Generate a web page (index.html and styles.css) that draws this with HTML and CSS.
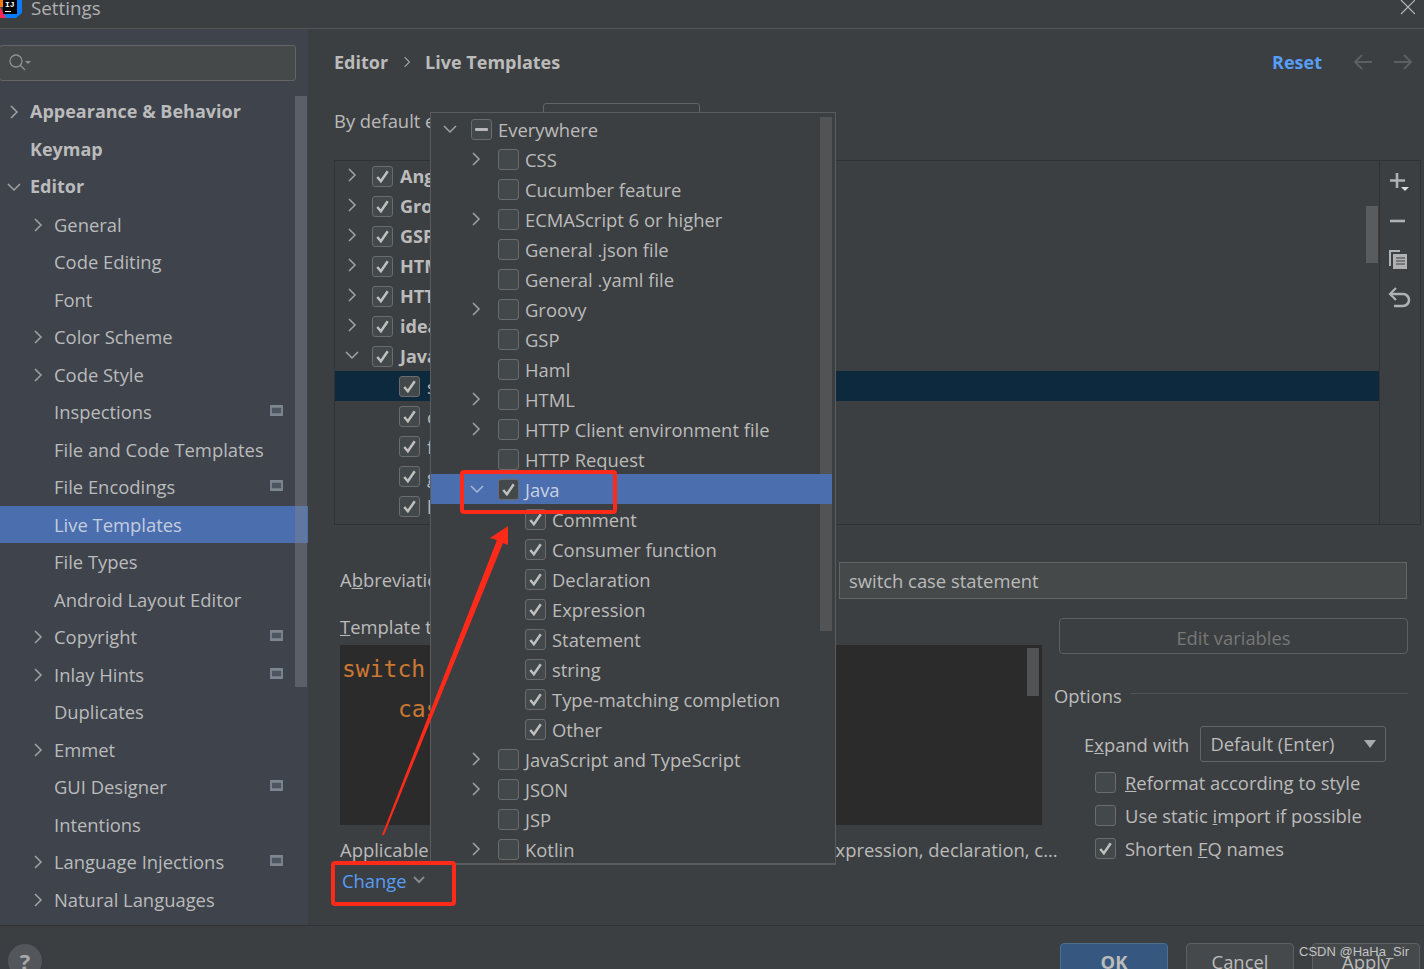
FILE: index.html
```html
<!DOCTYPE html>
<html>
<head>
<title>Settings</title>
<link rel="stylesheet" href="styles.css">
</head>
<body>
<svg class="defs" width="0" height="0">
	<symbol id="arr-r" viewBox="0 0 12 16"><path d="M3 2l6 6-6 6" fill="none" stroke="currentColor" stroke-width="1.5"/></symbol>
	<symbol id="arr-d" viewBox="0 0 16 12"><path d="M2 3l6 6 6-6" fill="none" stroke="currentColor" stroke-width="1.5"/></symbol>
	<symbol id="tick" viewBox="0 0 20 20"><path d="M4.500 10.500l3.800 4.500L15.500 4.500" fill="none" stroke="currentColor" stroke-width="2.600"/></symbol>
	<symbol id="proj" viewBox="0 0 14 12"><path d="M0 0h14v12H0z" fill="#7c8791"/><path d="M2 3h10v6H2z" fill="#4e5560"/></symbol>
</svg>

<div class="window">
	<div class="titlebar">
		<svg class="logo" width="22" height="20" viewBox="0 0 22 20">
			<path d="M4 0h18v14l-6 5H4z" fill="#087cfa"/>
			<path d="M0 0h8v8H0z" fill="#f97a12"/>
			<path d="M0 8l6 11H0z" fill="#fe2857"/>
			<path d="M3 0h14v15H3z" fill="#000"/>
			<path d="M5 12h6v1H5z" fill="#fff"/>
		</svg>
		<span class="logo-text">IJ</span>
		<span class="win-title">Settings</span>
		<svg class="win-close" width="15" height="15" viewBox="0 0 15 15"><path d="M1 0l14 14M15 0L1 14" stroke="#bbb" stroke-width="1.100"/></svg>
	</div>

	<div class="content">
		<div class="sidebar">
			<div class="search">
				<svg width="26" height="20" viewBox="0 0 26 20"><circle cx="9" cy="8" r="6" fill="none" stroke="#8f9294" stroke-width="1.300"/><path d="M13 12l5 5" stroke="#8f9294" stroke-width="1.300"/><path d="M18 8h6l-3 3z" fill="#8f9294"/></svg>
			</div>
			<div class="nav-wrap">
				<ul class="nav">
					<li class="bold"><svg class="a"><use href="#arr-r"/></svg>Appearance &amp; Behavior</li>
					<li class="bold">Keymap</li>
					<li class="bold"><svg class="d"><use href="#arr-d"/></svg>Editor</li>
					<li class="sub"><svg class="a"><use href="#arr-r"/></svg>General</li>
					<li class="sub">Code Editing</li>
					<li class="sub">Font</li>
					<li class="sub"><svg class="a"><use href="#arr-r"/></svg>Color Scheme</li>
					<li class="sub"><svg class="a"><use href="#arr-r"/></svg>Code Style</li>
					<li class="sub">Inspections<svg class="p"><use href="#proj"/></svg></li>
					<li class="sub">File and Code Templates</li>
					<li class="sub">File Encodings<svg class="p"><use href="#proj"/></svg></li>
					<li class="sub on">Live Templates</li>
					<li class="sub">File Types</li>
					<li class="sub">Android Layout Editor</li>
					<li class="sub"><svg class="a"><use href="#arr-r"/></svg>Copyright<svg class="p"><use href="#proj"/></svg></li>
					<li class="sub"><svg class="a"><use href="#arr-r"/></svg>Inlay Hints<svg class="p"><use href="#proj"/></svg></li>
					<li class="sub">Duplicates</li>
					<li class="sub"><svg class="a"><use href="#arr-r"/></svg>Emmet</li>
					<li class="sub">GUI Designer<svg class="p"><use href="#proj"/></svg></li>
					<li class="sub">Intentions</li>
					<li class="sub"><svg class="a"><use href="#arr-r"/></svg>Language Injections<svg class="p"><use href="#proj"/></svg></li>
					<li class="sub"><svg class="a"><use href="#arr-r"/></svg>Natural Languages</li>
				</ul>
				<div class="nav-scroll"></div>
			</div>
		</div>

		<div class="main">
			<div class="crumbs">
				<b>Editor</b>
				<svg class="crumb-sep"><use href="#arr-r"/></svg>
				<b>Live Templates</b>
				<a class="reset">Reset</a>
				<svg class="nav-arrow" width="20" height="16" viewBox="0 0 20 16"><path d="M19 8H2M9 1L2 8l7 7" fill="none" stroke="#5c5f61" stroke-width="2"/></svg>
				<svg class="nav-arrow" width="20" height="16" viewBox="0 0 20 16"><path d="M1 8h17M11 1l7 7-7 7" fill="none" stroke="#5c5f61" stroke-width="2"/></svg>
			</div>
			<div class="default-row">
				<span>By default expand with</span>
				<div class="default-combo"></div>
			</div>

			<div class="templates">
				<div class="tpl-list">
					<div class="tpl-row"><svg class="a"><use href="#arr-r"/></svg><i class="cb on"><svg><use href="#tick"/></svg></i><b>Angular</b></div>
					<div class="tpl-row"><svg class="a"><use href="#arr-r"/></svg><i class="cb on"><svg><use href="#tick"/></svg></i><b>Groovy</b></div>
					<div class="tpl-row"><svg class="a"><use href="#arr-r"/></svg><i class="cb on"><svg><use href="#tick"/></svg></i><b>GSP</b></div>
					<div class="tpl-row"><svg class="a"><use href="#arr-r"/></svg><i class="cb on"><svg><use href="#tick"/></svg></i><b>HTML</b></div>
					<div class="tpl-row"><svg class="a"><use href="#arr-r"/></svg><i class="cb on"><svg><use href="#tick"/></svg></i><b>HTTP</b></div>
					<div class="tpl-row"><svg class="a"><use href="#arr-r"/></svg><i class="cb on"><svg><use href="#tick"/></svg></i><b>idea</b></div>
					<div class="tpl-row"><svg class="d"><use href="#arr-d"/></svg><i class="cb on"><svg><use href="#tick"/></svg></i><b>Java</b></div>
					<div class="tpl-row child sel"><i class="cb on"><svg><use href="#tick"/></svg></i><span>sw</span></div>
					<div class="tpl-row child"><i class="cb on"><svg><use href="#tick"/></svg></i><span>c</span></div>
					<div class="tpl-row child"><i class="cb on"><svg><use href="#tick"/></svg></i><span>f</span></div>
					<div class="tpl-row child"><i class="cb on"><svg><use href="#tick"/></svg></i><span>g</span></div>
					<div class="tpl-row child"><i class="cb on"><svg><use href="#tick"/></svg></i><span>l</span></div>
					<div class="tpl-scroll"></div>
				</div>
				<div class="tpl-tools">
					<svg width="24" height="26" viewBox="0 0 24 26"><path d="M9 4v15M2 11.500h15" stroke="#afb1b3" stroke-width="2.600"/><path d="M13 18h8l-4 4z" fill="#ddd"/></svg>
					<svg width="24" height="26" viewBox="0 0 24 26"><path d="M2 13h15" stroke="#afb1b3" stroke-width="2.600"/></svg>
					<svg width="24" height="26" viewBox="0 0 24 26"><path d="M1 4h11v2H3v14H1z" fill="#afb1b3"/><path d="M5 8h14v15H5z" fill="#afb1b3"/><path d="M8 12h9M8 15h9M8 18h9" stroke="#3c3f41" stroke-width="1.200"/></svg>
					<svg width="24" height="26" viewBox="0 0 24 26"><path d="M3 9h12a5.500 5.500 0 0 1 0 12H6" fill="none" stroke="#afb1b3" stroke-width="2.600"/><path d="M8 3L2 9l6 6" fill="none" stroke="#afb1b3" stroke-width="2.200"/></svg>
				</div>
			</div>

			<div class="abbr-row">
				<span class="abbr-label">A<u>b</u>breviation:</span>
				<div class="desc-input">switch case statement</div>
			</div>

			<div class="detail">
				<div class="detail-left">
					<div class="tt-label"><u>T</u>emplate text:</div>
					<div class="code">
						<div class="code-line">switch</div>
						<div class="code-line indent">case</div>
						<div class="code-scroll"></div>
					</div>
					<div class="applicable"><span>Applicable in Java: string, consumer function, statement, expression, declaration, c...</span></div>
					<div class="change">Change<svg width="12" height="8" viewBox="0 0 12 8"><path d="M1 1l5 5 5-5" fill="none" stroke="#85888b" stroke-width="2"/></svg></div>
				</div>
				<div class="detail-right">
					<div class="edit-btn">Edit variables</div>
					<div class="options-head"><span>Options</span><hr></div>
					<div class="expand-row">
						<span>E<u>x</u>pand with</span>
						<div class="combo">Default (Enter)<em></em></div>
					</div>
					<div class="opt"><i class="cb"></i><span><u>R</u>eformat according to style</span></div>
					<div class="opt"><i class="cb"></i><span>Use static <u>i</u>mport if possible</span></div>
					<div class="opt"><i class="cb on"><svg><use href="#tick"/></svg></i><span>Shorten <u>F</u>Q names</span></div>
				</div>
			</div>
		</div>
	</div>

	<div class="footer">
		<div class="help">?</div>
		<div class="btn primary">OK</div>
		<div class="btn">Cancel</div>
		<div class="btn">Apply</div>
	</div>

	<div class="popup">
		<div class="popup-scroll"></div>
		<ul class="ctx">
			<li class="l0"><svg class="d"><use href="#arr-d"/></svg><i class="cb mixed"><s></s></i>Everywhere</li>
			<li class="l1"><svg class="a"><use href="#arr-r"/></svg><i class="cb"></i>CSS</li>
			<li class="l1"><i class="cb"></i>Cucumber feature</li>
			<li class="l1"><svg class="a"><use href="#arr-r"/></svg><i class="cb"></i>ECMAScript 6 or higher</li>
			<li class="l1"><i class="cb"></i>General .json file</li>
			<li class="l1"><i class="cb"></i>General .yaml file</li>
			<li class="l1"><svg class="a"><use href="#arr-r"/></svg><i class="cb"></i>Groovy</li>
			<li class="l1"><i class="cb"></i>GSP</li>
			<li class="l1"><i class="cb"></i>Haml</li>
			<li class="l1"><svg class="a"><use href="#arr-r"/></svg><i class="cb"></i>HTML</li>
			<li class="l1"><svg class="a"><use href="#arr-r"/></svg><i class="cb"></i>HTTP Client environment file</li>
			<li class="l1"><i class="cb"></i>HTTP Request</li>
			<li class="l1 sel"><svg class="d"><use href="#arr-d"/></svg><i class="cb on"><svg><use href="#tick"/></svg></i>Java</li>
			<li class="l2"><i class="cb on"><svg><use href="#tick"/></svg></i>Comment</li>
			<li class="l2"><i class="cb on"><svg><use href="#tick"/></svg></i>Consumer function</li>
			<li class="l2"><i class="cb on"><svg><use href="#tick"/></svg></i>Declaration</li>
			<li class="l2"><i class="cb on"><svg><use href="#tick"/></svg></i>Expression</li>
			<li class="l2"><i class="cb on"><svg><use href="#tick"/></svg></i>Statement</li>
			<li class="l2"><i class="cb on"><svg><use href="#tick"/></svg></i>string</li>
			<li class="l2"><i class="cb on"><svg><use href="#tick"/></svg></i>Type-matching completion</li>
			<li class="l2"><i class="cb on"><svg><use href="#tick"/></svg></i>Other</li>
			<li class="l1"><svg class="a"><use href="#arr-r"/></svg><i class="cb"></i>JavaScript and TypeScript</li>
			<li class="l1"><svg class="a"><use href="#arr-r"/></svg><i class="cb"></i>JSON</li>
			<li class="l1"><i class="cb"></i>JSP</li>
			<li class="l1"><svg class="a"><use href="#arr-r"/></svg><i class="cb"></i>Kotlin</li>
		</ul>
	</div>

	<!-- red marks drawn over the shot -->
	<div class="mark mark-java"></div>
	<div class="mark mark-change"></div>
	<svg class="mark-arrow" width="140" height="320" viewBox="0 0 140 320"><path d="M1 314L116 19L109 17L127 5L127 24L122 22L3 314z" fill="#ff2a1a"/></svg>
	<div class="watermark">CSDN @HaHa_Sir</div>
</div>
</body>
</html>
```

FILE: styles.css
```css
*{
	box-sizing:border-box;
}
html,body{
	margin:0;
	height:100%;
	overflow:hidden;
	background:#3c3f41;
}
ul{
	list-style:none;
	margin:0;
	padding:0;
}
i,em{
	font-style:normal;
}
.defs{
	position:absolute;
}
.window{
	position:relative;
	width:1424px;
	height:969px;
	overflow:hidden;
	display:flex;
	flex-direction:column;
	background:#3c3f41;
	color:#bbbbbb;
	font-family:"Open Sans","Noto Sans",sans-serif;
	font-size:18.400px;
}

/* title */
.titlebar{
	flex:none;
	height:29px;
	display:flex;
	align-items:flex-end;
	position:relative;
	border-bottom:1px solid #555555;
	padding-bottom:10px;
}
.logo{
	position:absolute;
	left:0;
	top:-1px;
}
.logo-text{
	position:absolute;
	left:5px;
	top:0;
	font:bold 8px "Liberation Mono",monospace;
	color:#fff;
}
.win-title{
	margin-left:31px;
	line-height:20px;
	font-size:18.800px;
	color:#afb1b3;
}
.win-close{
	position:absolute;
	right:9px;
	top:0;
}

.content{
	flex:none;
	height:896px;
	display:flex;
}

/* left tree */
.sidebar{
	flex:none;
	width:308px;
	background:#3e434c;
	padding-top:16px;
}
.search{
	margin-left:-1px;
	width:297px;
	height:36px;
	border:1px solid #646464;
	border-radius:3px;
	background:#45494a;
	padding:7px 0 0 7px;
}
.nav-wrap{
	position:relative;
	margin-top:12px;
}
.nav li{
	height:37.5px;
	line-height:37.5px;
	position:relative;
	white-space:nowrap;
	padding-left:30px;
}
.nav li.bold{
	font-weight:700;
	font-size:18px;
	color:#bbbbbb;
}
.nav li.sub{
	padding-left:54px;
}
.nav li.on{
	background:#4b6eaf;
	color:#c4cdde;
}
.nav svg.a,
.nav svg.d{
	position:absolute;
	left:8px;
	top:11px;
	color:#a0a3a6;
}
.nav li.sub svg.a{
	left:32px;
}
.nav svg.a{
	width:12px;
	height:16px;
}
.nav svg.d{
	width:16px;
	height:12px;
	left:6px;
	top:13px;
}
.nav svg.p{
	position:absolute;
	left:270px;
	top:12px;
	width:13px;
	height:11px;
}
.nav-scroll{
	position:absolute;
	left:295px;
	top:3px;
	width:12px;
	height:591px;
	background:rgba(125,130,140,.45);
}

/* right side */
.main{
	flex:1;
	min-width:0;
	padding-left:26px;
}
.crumbs{
	height:38px;
	margin-top:14px;
	display:flex;
	align-items:center;
	font-size:18px;
}
.crumbs b{
	font-weight:700;
}
.crumb-sep{
	width:12px;
	height:16px;
	margin:0 12px 0 13px;
	color:#a0a3a6;
	transform:scale(.8);
}
.reset{
	margin-left:auto;
	margin-right:31px;
	color:#589df6;
	font-weight:700;
}
.nav-arrow{
	margin-right:20px;
}
.nav-arrow:last-child{
	margin-right:11px;
}
.default-row{
	height:80px;
	display:flex;
	position:relative;
}
.default-row span{
	margin-top:26px;
	line-height:28px;
	height:28px;
}
.default-combo{
	position:absolute;
	left:209px;
	top:22px;
	width:157px;
	height:36px;
	border:1px solid #646464;
	border-radius:3px;
}
.templates{
	height:365px;
	display:flex;
	margin-top:-1px;
}
.tpl-list{
	width:1046px;
	border:1px solid #323232;
	position:relative;
	overflow:hidden;
}
.tpl-tools{
	width:41px;
	border:1px solid #323232;
	border-left:none;
	padding:8px 0 0 8px;
	display:flex;
	flex-direction:column;
	gap:12.5px;
}
.tpl-row{
	height:30px;
	display:flex;
	align-items:center;
	padding-left:37px;
	position:relative;
	white-space:nowrap;
}
.tpl-row svg.a{
	position:absolute;
	left:11px;
	top:6px;
	width:12px;
	height:16px;
	color:#a0a3a6;
}
.tpl-row svg.d{
	position:absolute;
	left:9px;
	top:8px;
	width:16px;
	height:12px;
	color:#a0a3a6;
}
.tpl-row b{
	margin-left:7px;
	font-size:18px;
}
.tpl-row span{
	margin-left:7px;
}
.tpl-row.child{
	padding-left:64px;
}
.tpl-row.sel{
	background:#0d293e;
}
.tpl-scroll{
	position:absolute;
	right:1px;
	top:45px;
	width:12px;
	height:57px;
	background:#595b5d;
}
.cb{
	flex:none;
	display:inline-block;
	width:21px;
	height:21px;
	border:1px solid #6b6b6b;
	border-radius:3px;
	background:#43494a;
	color:#c0c0c0;
	position:relative;
}
.cb svg{
	position:absolute;
	left:0;
	top:0;
	width:19px;
	height:19px;
}
.cb.mixed s{
	position:absolute;
	left:3px;
	top:8px;
	width:13px;
	height:3px;
	background:#b8b8b8;
	border-radius:1px;
}

.abbr-row{
	height:38px;
	margin-top:36px;
	display:flex;
	align-items:center;
	padding-left:6px;
}
.abbr-label{
	line-height:38px;
}
.desc-input{
	margin-left:auto;
	margin-right:17px;
	width:568px;
	height:37px;
	line-height:35px;
	padding-left:9px;
	background:#45494a;
	border:1px solid #646464;
}

.detail{
	display:flex;
	margin-top:19px;
	padding-left:6px;
}
.detail-left{
	width:702px;
}
.tt-label{
	height:27px;
	line-height:18px;
}
.code{
	height:180px;
	background:#2b2b2b;
	position:relative;
	font:23px/40px "DejaVu Sans Mono",monospace;
	color:#cc7832;
	padding:4px 0 0 2px;
}
.code-line.indent{
	padding-left:56px;
}
.code-scroll{
	position:absolute;
	right:3px;
	top:3px;
	width:12px;
	height:48px;
	background:#505254;
}
.applicable{
	height:41px;
	line-height:50px;
	white-space:nowrap;
}
.change{
	margin-top:1px;
	padding-left:2px;
	color:#589df6;
	line-height:28px;
	display:flex;
	align-items:center;
	gap:6px;
}
.change svg{
	margin-top:-3px;
}
.detail-right{
	margin-left:12px;
	width:354px;
}
.edit-btn{
	width:349px;
	height:36px;
	margin-left:5px;
	border:1px solid #5e6060;
	border-radius:4px;
	text-align:center;
	line-height:37px;
	color:#777777;
}
.options-head{
	display:flex;
	align-items:center;
	height:28px;
	margin-top:27px;
	gap:9px;
}
.options-head hr{
	flex:1;
	border:none;
	border-top:1px solid #515151;
	margin:0 0 4px;
}
.expand-row{
	display:flex;
	align-items:center;
	margin-top:17px;
	padding-left:30px;
	gap:11px;
}
.combo{
	width:186px;
	height:36px;
	border:1px solid #646464;
	border-radius:3px;
	padding-left:9px;
	line-height:34px;
	position:relative;
}
.combo em{
	position:absolute;
	right:9px;
	top:13px;
	border-top:8px solid #a9abad;
	border-left:6.500px solid transparent;
	border-right:6.500px solid transparent;
}
.opt{
	height:33px;
	display:flex;
	align-items:center;
	padding-left:41px;
	gap:9px;
	white-space:nowrap;
}
.expand-row + .opt{
	margin-top:4px;
}

/* bottom */
.footer{
	flex:none;
	height:44px;
	border-top:1px solid #323232;
	position:relative;
	display:flex;
	gap:18px;
	justify-content:flex-end;
	padding:17px 4px 0 0;
	overflow:hidden;
}
.help{
	position:absolute;
	left:8px;
	top:18px;
	width:34px;
	height:34px;
	border-radius:50%;
	background:#53565a;
	text-align:center;
	font-weight:700;
	line-height:34px;
	color:#a8a8a8;
	font-size:22px;
}
.btn{
	flex:none;
	width:108px;
	height:44px;
	border:1px solid #5e6060;
	border-radius:4px;
	background:#45494b;
	text-align:center;
	line-height:36px;
}
.btn.primary{
	background:#365880;
	border-color:#4c708c;
	font-weight:700;
	color:#bbbbbb;
}

/* Scope popup */
.popup{
	position:absolute;
	left:430px;
	top:112px;
	width:406px;
	height:753px;
	background:#3c3f41;
	border:1px solid #5b5b5b;
	border-bottom-width:2px;
	padding-top:1px;
	overflow:hidden;
}
.ctx{
	position:relative;
}
.ctx li{
	height:30px;
	position:relative;
	display:flex;
	align-items:center;
	gap:6px;
	white-space:nowrap;
	margin-right:3px;
}
.ctx li.l0{
	padding-left:40px;
}
.ctx li.l1{
	padding-left:67px;
}
.ctx li.l2{
	padding-left:94px;
}
.ctx svg.a,
.ctx svg.d{
	position:absolute;
	top:7px;
	color:#a0a3a6;
}
.ctx svg.a{
	width:12px;
	height:16px;
	left:39px;
}
.ctx svg.d{
	width:16px;
	height:12px;
	left:11px;
	top:9px;
}
.ctx li.sel svg.d{
	left:38px;
	color:#a8b8d6;
}
.ctx li.sel{
	background:#4b6eaf;
	color:#c9d2e2;
}
.ctx li.sel .cb{
	background:#43494a;
}
.ctx .cb svg{
	color:#c0c0c0;
}
.popup-scroll{
	position:absolute;
	right:3px;
	top:4px;
	width:12px;
	height:514px;
	background:#515355;
}

/* annotations */
.mark{
	position:absolute;
	border:4px solid #ff2a1a;
	border-radius:4px;
}
.mark-java{
	left:460px;
	top:470px;
	width:157px;
	height:44px;
}
.mark-change{
	left:331px;
	top:861px;
	width:125px;
	height:45px;
}
.mark-arrow{
	position:absolute;
	left:381px;
	top:521px;
}
.watermark{
	position:absolute;
	left:1299px;
	top:944px;
	font:13px/16px "Liberation Sans",sans-serif;
	color:#c4c4c4;
}
```
